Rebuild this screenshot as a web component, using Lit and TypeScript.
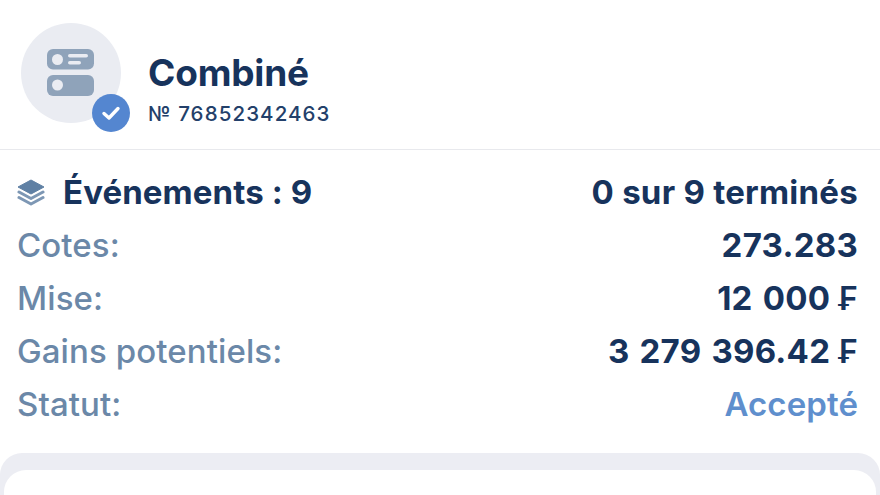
import { LitElement, css, html } from 'lit';
import { customElement } from 'lit/decorators.js';

type Row = { label: string; value: string; currency?: boolean; accent?: boolean };

const ROWS: Row[] = [
  { label: 'Cotes:', value: '273.283' },
  { label: 'Mise:', value: '12 000', currency: true },
  { label: 'Gains potentiels:', value: '3 279 396.42', currency: true },
  { label: 'Statut:', value: 'Accepté', accent: true },
];

@customElement('app-root')
export class AppRoot extends LitElement {
  static styles = css`
    :host {
      display: block;
      width: 880px;
      height: 495px;
      overflow: hidden;
      background: #fff;
      font-family: Inter, 'Liberation Sans', sans-serif;
      color: #17335c;
    }
    .head {
      box-sizing: border-box;
      height: 150px;
      padding: 23px 21px 0;
      display: flex;
      gap: 27px;
      border-bottom: 1.5px solid #e8e9ed;
    }
    .avatar {
      position: relative;
      flex: none;
      width: 100px;
      height: 100px;
      border-radius: 50%;
      background: #eaecf2;
      display: flex;
      align-items: center;
      justify-content: center;
    }
    .badge {
      position: absolute;
      left: 71px;
      top: 71px;
      width: 38px;
      height: 38px;
      border-radius: 50%;
      background: #5486d0;
      display: flex;
      align-items: center;
      justify-content: center;
    }
    .title {
      margin-top: 28px;
      font-size: 37px;
      line-height: 44px;
      font-weight: 700;
      letter-spacing: -0.2px;
    }
    .number {
      margin-top: 6px;
      font-size: 20.5px;
      line-height: 26px;
      font-weight: 500;
      letter-spacing: 1.1px;
      color: #23406a;
    }
    .rows {
      padding: 15px 22px 0 17px;
      display: flex;
      flex-direction: column;
    }
    .row {
      height: 53px;
      display: flex;
      justify-content: space-between;
      align-items: center;
      font-size: 33px;
      font-weight: 700;
      letter-spacing: 0.25px;
      white-space: nowrap;
    }
    .events {
      display: flex;
      align-items: center;
      gap: 18px;
      letter-spacing: 0.1px;
    }
    .label {
      font-weight: 550;
      letter-spacing: 0.1px;
      color: #6b88a8;
    }
    .accent {
      font-weight: 600;
      letter-spacing: 0.1px;
      color: #5f8fcd;
    }
    .money {
      word-spacing: 2px;
    }
    .cur {
      margin-left: 8px;
      font-size: 32px;
      font-weight: 600;
    }
    .panel {
      box-sizing: border-box;
      height: 60px;
      margin-top: 23px;
      padding-top: 17px;
      background: #ecedf3;
      border-radius: 22px 22px 0 0;
    }
    .card {
      height: 60px;
      margin: 0 4px;
      background: #fff;
      border-radius: 22px 22px 0 0;
    }
  `;

  private _slips() {
    return html`<svg width="48" height="48" viewBox="0 0 48 48">
      <rect x="0" y="0" width="47" height="20.5" rx="6" fill="#8fa3ba" />
      <rect x="0" y="26" width="47" height="21" rx="6" fill="#8fa3ba" />
      <circle cx="10.5" cy="10.5" r="5.5" fill="#eaecf2" />
      <circle cx="10.5" cy="36" r="5.5" fill="#eaecf2" />
      <rect x="21" y="5" width="20" height="3.6" rx="1.8" fill="#eaecf2" />
      <rect x="21" y="12" width="13" height="3.6" rx="1.8" fill="#eaecf2" />
    </svg>`;
  }

  private _check() {
    return html`<svg width="24" height="24" viewBox="0 0 24 24">
      <path
        d="M5 12.5l5 4.5 9-9.5"
        fill="none"
        stroke="#fff"
        stroke-width="3.4"
        stroke-linecap="round"
        stroke-linejoin="round"
      />
    </svg>`;
  }

  private _layers() {
    return html`<svg width="28" height="28" viewBox="0 0 28 28">
      <path d="M14 2L27 9 14 16 1 9z" fill="#5f80a4" stroke="#5f80a4" stroke-width="1" stroke-linejoin="round" />
      <path d="M2 14l12 6.5L26 14" fill="none" stroke="#7d97b4" stroke-width="3" stroke-linecap="round" stroke-linejoin="round" />
      <path d="M2 19.5L14 26l12-6.5" fill="none" stroke="#7d97b4" stroke-width="3" stroke-linecap="round" stroke-linejoin="round" />
    </svg>`;
  }

  render() {
    return html`
      <div class="head">
        <div class="avatar">
          ${this._slips()}
          <div class="badge">${this._check()}</div>
        </div>
        <div>
          <div class="title">Combiné</div>
          <div class="number">№ 76852342463</div>
        </div>
      </div>
      <div class="rows">
        <div class="row">
          <div class="events">${this._layers()}<span>Événements : 9</span></div>
          <div>0 sur 9 terminés</div>
        </div>
        ${ROWS.map(
          (r) => html`<div class="row">
            <div class="label">${r.label}</div>
            <div class=${r.accent ? 'accent' : r.currency ? 'money' : ''}>
              ${r.value}${r.currency ? html`<span class="cur">₣</span>` : ''}
            </div>
          </div>`,
        )}
      </div>
      <div class="panel"><div class="card"></div></div>
    `;
  }
}

declare global {
  interface HTMLElementTagNameMap {
    'app-root': AppRoot;
  }
}
